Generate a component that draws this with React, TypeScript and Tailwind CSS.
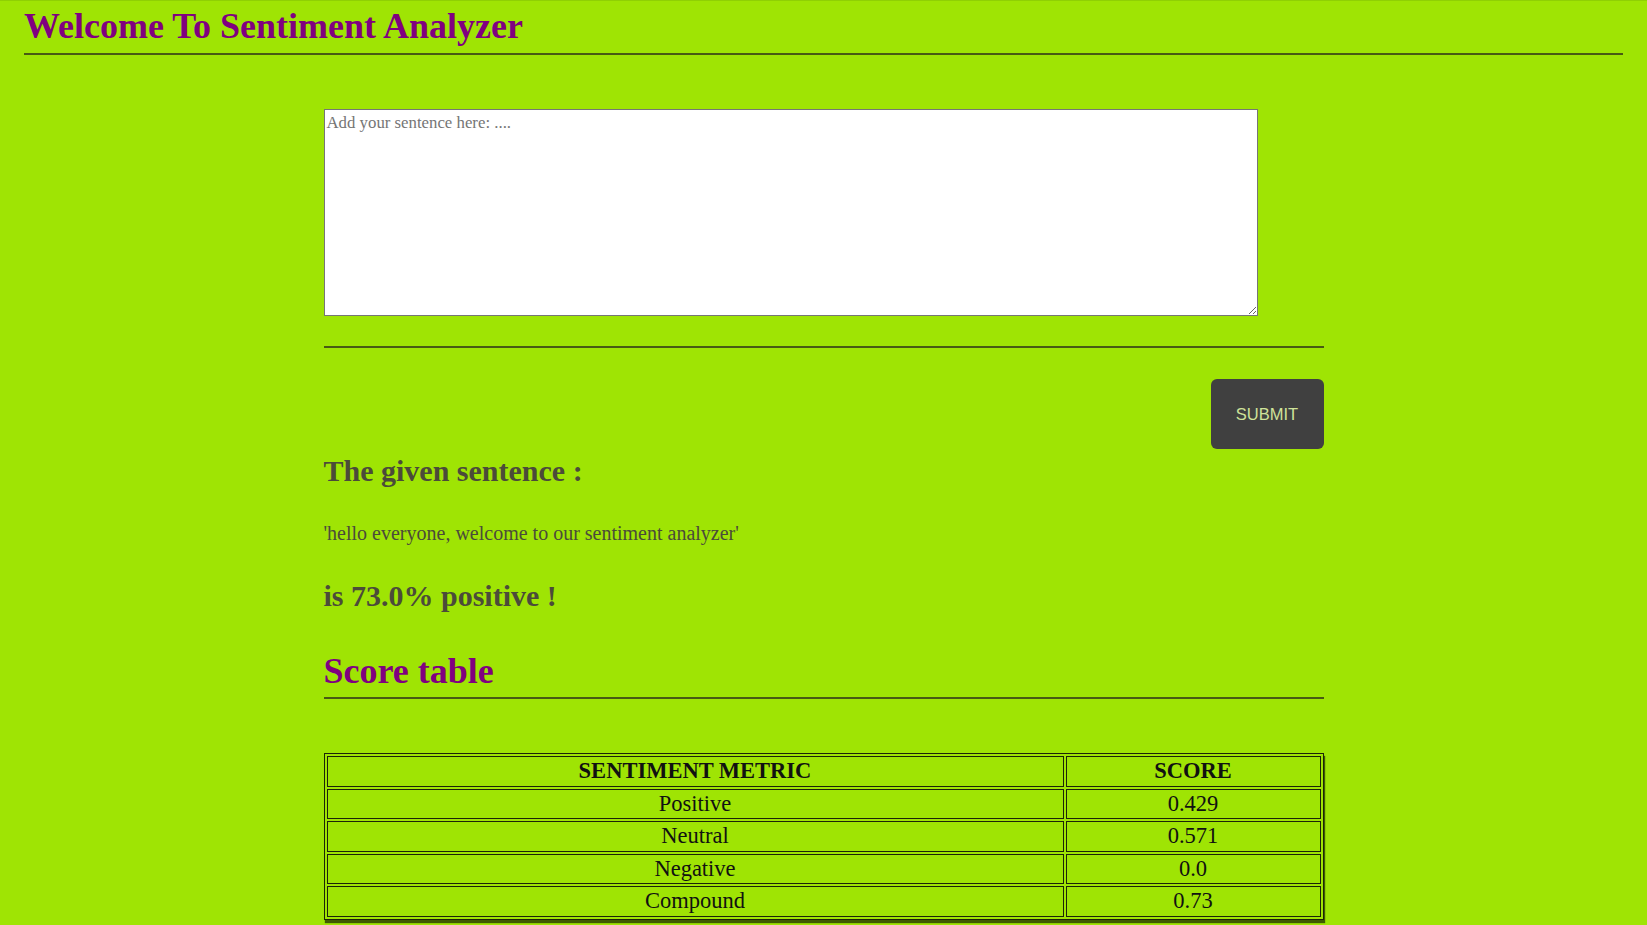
import { useState } from 'react'

const scores = [
  { metric: 'Positive', score: '0.429' },
  { metric: 'Neutral', score: '0.571' },
  { metric: 'Negative', score: '0.0' },
  { metric: 'Compound', score: '0.73' },
]

export default function App() {
  const [sentence, setSentence] = useState('')

  return (
    <div className="min-h-screen bg-[#9fe404] border-t border-[#8fd004] font-['Liberation_Serif',serif]">
      {/* Header */}
      <div className="px-6 pt-[5px]">
        <h1 className="text-[36px] leading-[41px] font-bold text-[#800080]">
          Welcome To Sentiment Analyzer
        </h1>
        <div className="mt-[6px] h-[2px] bg-[#485a14]" />
      </div>

      <div className="w-[1000px] mx-auto pt-[54px]">
        {/* Input */}
        <form onSubmit={(e) => e.preventDefault()}>
          <textarea
            value={sentence}
            onChange={(e) => setSentence(e.target.value)}
            placeholder="Add your sentence here: ...."
            className="block w-[934px] h-[207px] bg-white border border-[#767676] px-[2px] pt-[3px] text-[16.8px] leading-[20px] text-black placeholder:text-[#757575] font-['Liberation_Serif',serif] outline-none"
          />
          <div className="mt-[30px] h-[2px] bg-[#485a14]" />
          <div className="flex justify-end mt-[31px]">
            <button
              type="submit"
              className="w-[113px] h-[70px] rounded-[6px] bg-[#404040] text-[#cfe39a] text-[16.5px] font-['Liberation_Sans',sans-serif]"
            >
              SUBMIT
            </button>
          </div>
        </form>

        {/* Result */}
        <h2 className="mt-[4px] text-[30px] leading-[36px] font-bold text-[#4b4b3a]">
          The given sentence :
        </h2>
        <p className="mt-[32px] text-[20px] leading-[24px] text-[#4b4b3a]">
          'hello everyone, welcome to our sentiment analyzer'
        </p>
        <h2 className="mt-[33px] text-[30px] leading-[36px] font-bold text-[#4b4b3a]">
          is 73.0% positive !
        </h2>

        {/* Score table */}
        <h2 className="mt-[37px] text-[36px] leading-[41px] font-bold text-[#800080]">
          Score table
        </h2>
        <div className="mt-[5px] h-[2px] bg-[#485a14]" />

        <table className="mt-[54px] w-[1000px] border-separate border-spacing-[2px] border border-[#1c2408] shadow-[1px_3px_1px_rgba(0,0,0,0.6)] text-[22.5px] leading-[26px] text-[#111]">
          <thead>
            <tr>
              <th className="w-[737px] h-[30.5px] p-0 border border-[#1c2408] font-bold">SENTIMENT METRIC</th>
              <th className="h-[30.5px] p-0 border border-[#1c2408] font-bold">SCORE</th>
            </tr>
          </thead>
          <tbody>
            {scores.map((row) => (
              <tr key={row.metric}>
                <td className="h-[30.5px] p-0 border border-[#1c2408] text-center">{row.metric}</td>
                <td className="h-[30.5px] p-0 border border-[#1c2408] text-center">{row.score}</td>
              </tr>
            ))}
          </tbody>
        </table>
      </div>
    </div>
  )
}
